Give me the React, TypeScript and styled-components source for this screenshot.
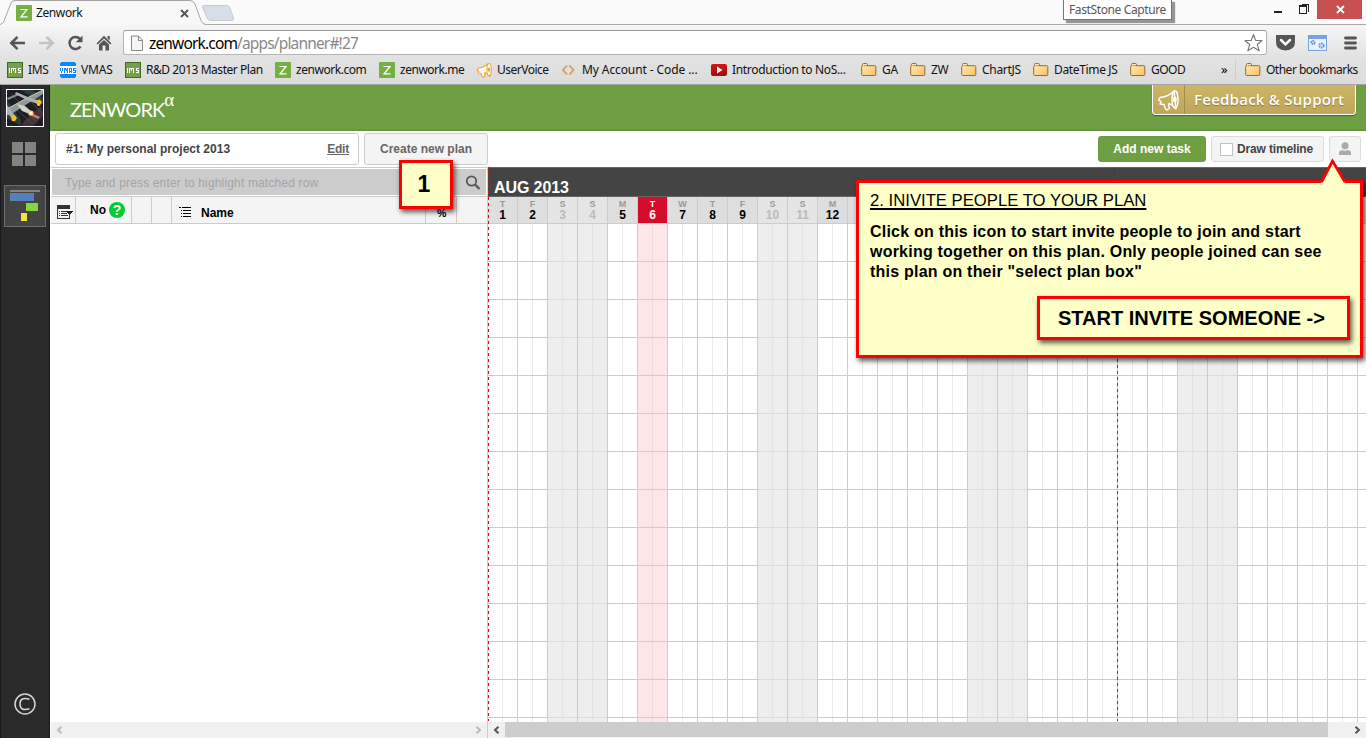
import React from "react";
import styled, { createGlobalStyle } from "styled-components";

const ui = '"Noto Sans", "Open Sans", sans-serif';
const arial = '"Liberation Sans", Arial, sans-serif';

const GlobalStyle = createGlobalStyle`
  * { box-sizing: border-box; }
  body { margin: 0; background: #fff; font-family: ${arial}; overflow: hidden; }
  svg { display: block; flex: none; }
`;

const Window = styled.div`
  position: relative;
  width: 1366px;
  height: 738px;
  display: flex;
  flex-direction: column;
  overflow: hidden;
`;

/* ---------- browser frame ---------- */
const TabStrip = styled.div`
  height: 25px;
  background: #fbfbfb;
  display: flex;
  position: relative;
  border-bottom: 1px solid #a9a9a9;
`;
const TabShape = styled.svg`
  position: absolute;
  left: 0;
  top: 0;
`;
const TabContent = styled.div`
  position: relative;
  display: flex;
  align-items: center;
  width: 204px;
  height: 25px;
  padding: 1px 15px 0 16px;
`;
const Label = styled.span<{ $w: number; $ls?: number }>`
  font: 12px/16px ${ui};
  letter-spacing: ${(p) => p.$ls ?? 0}px;
  width: ${(p) => p.$w}px;
  white-space: nowrap;
  flex: none;
  color: #111;
`;
const TabTitle = styled(Label)`
  margin-left: 4px;
  margin-right: auto;
`;
const WindowButtons = styled.div`
  margin-left: auto;
  margin-right: 4px;
  display: flex;
  gap: 7px;
`;
const CloseButton = styled.div`
  width: 45px;
  height: 19px;
  background: #c75050;
  display: flex;
  align-items: center;
  justify-content: center;
  padding-left: 1px;
`;
const HoverTip = styled.div`
  position: absolute;
  left: 1063px;
  top: -1px;
  width: 109px;
  height: 21px;
  border: 1px solid #767676;
  background: #fff;
  box-shadow: 3px 3px 1px rgba(0, 0, 0, 0.4);
  padding: 2px 0 0 5px;
`;
const TipLabel = styled(Label)`
  display: block;
  color: #575757;
`;
const Toolbar = styled.div`
  height: 60px;
  background: linear-gradient(#f6f6f6, #e2e2e2 55%, #dcdcdc);
  border-bottom: 1px solid #a5a5a5;
`;
const NavRow = styled.div`
  height: 31px;
  display: flex;
  align-items: center;
  padding: 4px 8px 0 9px;
`;
const NavIcons = styled.div`
  display: flex;
  width: 114px;
  gap: 12px;
  align-items: center;
`;
const Omnibox = styled.div`
  width: 1144px;
  height: 25px;
  background: #fff;
  border: 1px solid #b5b5b5;
  border-top-color: #999;
  border-radius: 3px;
  display: flex;
  align-items: center;
  padding: 0 3px 0 7px;
`;
const Url = styled.span`
  font: 15.5px/22px ${ui};
  letter-spacing: -0.84px;
  margin-left: 6px;
  margin-right: auto;
  color: #000;
  i { font-style: normal; color: #888; }
`;
const ToolIcons = styled.div`
  display: flex;
  align-items: center;
  gap: 13px;
  margin-left: 9px;
  svg:last-child { margin-left: 4px; }
`;
const Bookmarks = styled.div`
  height: 28px;
  display: flex;
  gap: 12px;
  padding: 0 0 0 7px;
  align-items: center;
`;
const Bookmark = styled.div`
  display: flex;
  align-items: center;
  gap: 5px;
  flex: none;
`;
const More = styled.span`
  font: 13px/16px ${ui};
  width: 10px;
  margin: 0 0 2px 23px;
`;
const BarSeparator = styled.div`
  width: 1px;
  height: 22px;
  background: #c8cfd6;
  margin: 0 -3px 0 -8px;
`;

/* ---------- application ---------- */
const Workspace = styled.div`
  flex: 1;
  display: flex;
  min-height: 0;
`;
const Sidebar = styled.aside`
  width: 50px;
  flex: none;
  background: #2a2a2a;
  border-left: 1px solid #15181e;
  border-right: 1px solid #15181e;
  display: flex;
  flex-direction: column;
  align-items: center;
  padding-top: 4px;
`;
const Avatar = styled.svg`
  border: 1px solid #fff;
`;
const GridIcon = styled.div`
  display: grid;
  grid-template-columns: 11px 11px;
  gap: 2px;
  margin-top: 15px;
  margin-right: 2px;
  span { height: 11px; background: #858282; }
`;
const PlannerTile = styled.div`
  width: 42px;
  height: 42px;
  margin-top: 19px;
  border: 1px solid #6d6d6d;
  background: #444;
`;
const Copyright = styled.div`
  margin: auto 0 23px 0;
`;
const Main = styled.main`
  flex: 1;
  min-width: 0;
  display: flex;
  flex-direction: column;
`;
const Banner = styled.header`
  height: 46px;
  background: #6ea043;
  border-bottom: 2px solid #679640;
  display: flex;
  padding: 0 10px 0 20px;
  justify-content: space-between;
`;
const Logo = styled.div`
  font: 20px/24px Lato, sans-serif;
  color: #fff;
  letter-spacing: -1px;
  padding-top: 12px;
  display: flex;
  sup { font: 19px/12px "Liberation Serif", serif; margin: -3px 0 0 0; }
`;
const Feedback = styled.div`
  width: 204px;
  height: 30px;
  background: linear-gradient(#cdb565, #bfa75b);
  border: 1px solid #fff;
  border-top: 0;
  border-radius: 0 0 4px 4px;
  box-shadow: 0 1px 1px #555;
  display: flex;
  align-items: center;
  svg { margin-left: 4px; }
  span {
    border-left: 1px solid #a28e4c;
    margin-left: 5px;
    padding-left: 9px;
    height: 29px;
    white-space: nowrap;
    font: 600 15px/29px "Open Sans", sans-serif;
    letter-spacing: 0.25px;
    color: #fff;
    text-shadow: 0 1px 1px #8a7634;
  }
`;
const PlanBar = styled.div`
  height: 36px;
  display: flex;
  gap: 5px;
  padding: 2px 5px 0 5px;
  font: bold 12px/32px ${arial};
`;
const Box = styled.div<{ $w: number; $h?: number; $plain?: boolean; $green?: boolean }>`
  width: ${(p) => p.$w}px;
  height: ${(p) => p.$h ?? 32}px;
  line-height: ${(p) => (p.$h ?? 32) - 2}px;
  border: 1px solid ${(p) => (p.$green ? "#6a9a42" : p.$h ? "#dcdcdc" : "#ccc")};
  border-radius: 3px;
  background: ${(p) => (p.$green ? "#6ea043" : p.$plain ? "#fff" : "#f4f4f4")};
  color: ${(p) => (p.$green ? "#fff" : p.$plain ? "#444" : "#666")};
  display: flex;
  justify-content: ${(p) => (p.$plain ? "space-between" : "center")};
  align-items: center;
  padding: 0 ${(p) => (p.$plain ? 10 : 0)}px;
  u { color: #666; margin-right: -1px; letter-spacing: -0.2px; }
`;
const Actions = styled.div`
  display: flex;
  gap: 5px;
  margin-left: auto;
  padding-top: 3px;
`;
const DrawLabel = styled.span`
  color: #444;
  margin: 0 2px 0 4px;
  letter-spacing: -0.15px;
`;
const CheckBox = styled.span`
  width: 13px;
  height: 13px;
  border: 1px solid #c0c0c0;
  background: #fff;
`;
const Work = styled.div`
  flex: 1;
  min-height: 0;
  display: flex;
`;
const TaskPane = styled.section`
  width: 438px;
  flex: none;
  border-right: 1px solid #ccc;
  border-left: 1px solid #fff;
  display: flex;
  flex-direction: column;
`;
const SearchRow = styled.div`
  height: 30px;
  border: solid #ccc;
  border-width: 1px 0;
  padding: 1px;
`;
const SearchField = styled.div`
  height: 26px;
  background: #ccc;
  color: #a5a5a5;
  font: 12px/28px ${arial};
  letter-spacing: 0.16px;
  padding: 1px 5px 0 13px;
  display: flex;
  justify-content: space-between;
  align-items: center;
`;
const HeadRow = styled.div`
  height: 27px;
  background: #f4f4f4;
  border-bottom: 1px solid #ccc;
  display: flex;
`;
const HeadCell = styled.div<{ $w: number; $last?: boolean }>`
  width: ${(p) => p.$w}px;
  border-right: ${(p) => (p.$last ? 0 : 1)}px solid #ccc;
  display: flex;
  align-items: center;
  font: bold 12px/26px ${arial};
  color: #000;
`;
const ListIcon = styled.svg`
  margin: 5px 0 0 6px;
`;
const OutlineIcon = styled.svg`
  margin: 2px 1px 0 -1px;
`;
const NoText = styled.span`
  margin: 0 4px 0 14px;
`;
const NameText = styled.span`
  padding: 5px 0 0 8px;
`;
const Percent = styled.span`
  font: bold 10.5px/12px ${arial};
  padding: 6px 0 0 11px;
`;
const Help = styled.span`
  width: 16px;
  height: 16px;
  border-radius: 50%;
  background: #0c3;
  color: #fff;
  font: bold 14px/16px ${arial};
  text-align: center;
  margin-left: -1px;
`;
const TaskList = styled.div`
  flex: 1;
`;
const ScrollBar = styled.div`
  height: 16px;
  background: #f0f0f0;
  display: flex;
  align-items: center;
  justify-content: space-between;
  padding: 0 5px 1px;
`;
const Thumb = styled.div`
  width: 823px;
  height: 15px;
  margin-right: auto;
  margin-left: 5px;
  align-self: flex-start;
  background: #cdcdcd;
`;
const Gantt = styled.section`
  position: relative;
  flex: 1;
  min-width: 0;
  display: flex;
  flex-direction: column;
`;
const Month = styled.div`
  height: 30px;
  background: #444;
  border-top: 1px solid #666;
  border-bottom: 1px solid #666;
  color: #fff;
  font: bold 16px/18px ${arial};
  letter-spacing: -0.1px;
  padding: 11px 0 0 6px;
`;
const Days = styled.div`
  flex: 1;
  min-height: 0;
  display: flex;
  overflow: hidden;
`;
type Kind = "work" | "off" | "today";
const DayColumn = styled.div`
  width: 30px;
  flex: none;
  display: flex;
  flex-direction: column;
`;
const DayHead = styled.div<{ $kind: Kind }>`
  height: 27px;
  border-right: 1px solid #ccc;
  border-bottom: 1px solid #ccc;
  background: ${(p) => ({ work: "#dedede", off: "#e5e5e5", today: "#d60c2c" })[p.$kind]};
  color: ${(p) => ({ work: "#000", off: "#bbb", today: "#fff" })[p.$kind]};
  text-align: center;
  font: bold 12px/13px ${arial};
  padding-top: 2px;
  small {
    display: block;
    font: bold 9px/10px ${arial};
    color: ${(p) => (p.$kind === "today" ? "#fff" : "#999")};
  }
`;
const rowLine = { work: "#ccc", off: "#dcdcdc", today: "#dfc6c8" };
const halfLine = { work: "#ebebeb", off: "#e4e4e4", today: "#f1d8da" };
const dayFill = { work: "#fff", off: "#eee", today: "#fde6e8" };
const DayBody = styled.div<{ $kind: Kind }>`
  flex: 1;
  border-right: 1px solid #ccc;
  background:
    repeating-linear-gradient(transparent 0 37px, ${(p) => rowLine[p.$kind]} 37px 38px),
    linear-gradient(${(p) => halfLine[p.$kind]}, ${(p) => halfLine[p.$kind]}) 14px 0 / 1px 100% no-repeat
    ${(p) => dayFill[p.$kind]};
`;
const DashLine = styled.div<{ $x: number }>`
  position: absolute;
  left: ${(p) => p.$x}px;
  top: 0;
  width: 1px;
  height: 554px;
  background: repeating-linear-gradient(#e00f0f 0 3px, transparent 3px 6px);
`;

/* ---------- tour notes ---------- */
const Note = styled.div`
  position: absolute;
  border: 3px solid #f00;
  background: #ffffc8;
  color: #000;
  box-shadow: 2px 3px 5px rgba(0, 0, 0, 0.65);
`;
const StepOne = styled(Note)`
  left: 399px;
  top: 160px;
  width: 54px;
  height: 49px;
  font: bold 23px/43px ${arial};
  text-align: center;
  padding-right: 4px;
`;
const StepTwo = styled(Note)`
  left: 856px;
  top: 180px;
  width: 507px;
  height: 178px;
  padding: 8px 10px 0 11px;
`;
const NoteTitle = styled.div`
  font: 16.7px/20px ${arial};
  text-decoration: underline;
  text-decoration-thickness: 2px;
  text-underline-offset: 2px;
  white-space: nowrap;
`;
const NoteText = styled.p`
  margin: 11px 0 0;
  font: bold 16px/20px ${arial};
  letter-spacing: 0.22px;
  white-space: nowrap;
`;
const InviteButton = styled(Note)`
  position: relative;
  width: 313px;
  height: 44px;
  margin: 14px 0 0 auto;
  font: bold 20px/38px ${arial};
  padding-left: 18px;
  white-space: nowrap;
`;
const Pointer = styled.svg`
  position: absolute;
  left: 1320px;
  top: 158px;
`;

/* ---------- icons ---------- */
const Zen = () => (
  <svg width="16" height="16"><rect width="16" height="16" rx="1" fill="#76b043" /><path d="M4.500 4.500h6.500L5 11.800h6.500" fill="none" stroke="#fff" strokeWidth="1.200" /></svg>
);
const Ims = () => (
  <svg width="16" height="16" shapeRendering="crispEdges"><rect x=".5" y=".5" width="15" height="15" fill="#76a04c" stroke="#3f6a22" /><path d="M2.500 6v5M5 6.500h4M4.500 6v5M6.500 7v2M8.500 6v5M14 6.500h-3v2h2.500v2h-3" fill="none" stroke="#fff" /></svg>
);
const Vmas = () => (
  <svg width="16" height="16" shapeRendering="crispEdges"><path d="M1 0h14v1h1v4H0V1h1zM0 12h16v3h-1v1H1v-1H0z" fill="#0d85ff" /><rect y="4" width="16" height="8" fill="#fff" /><path d="M.5 6v3M1.500 9v2M2.500 6v3M4.500 11V6M5.500 6v2M6.500 7v2M7.500 6v5M9.500 11V6.500h2V11M9 9.500h3M16 6.500h-2.500v2h2v2H13" fill="none" stroke="#0d85ff" /></svg>
);
const Horn = ({ c = "#f0a030", s = 16, f = "#fff" }) => (
  <svg width={s} height={s} viewBox="0 0 22 22" fill={f} stroke={c} strokeWidth="1.400" strokeLinejoin="round"><path d="M1.500 11 3 8.500Q12 7.500 17 2l2 18Q15.500 15.500 12 14.500l-.5 2 1 3-2.500 1.500-1.500-1-1.500-4.500L3 15l1-2.500z" /><ellipse cx="18" cy="10.500" rx="3" ry="8.500" /><ellipse cx="17.800" cy="10.500" rx="1.200" ry="2.200" fill={c} /></svg>
);
const Code = () => (
  <svg width="16" height="16" fill="none" stroke="#e59350" strokeWidth="1.700"><path d="M6 3.500 2 8l4 4.500M8.500 3.500l4 4.500-4 4.500" /></svg>
);
const Tube = () => (
  <svg width="16" height="16"><defs><linearGradient id="yt" x2="0" y2="1"><stop stopColor="#d01818" /><stop offset="1" stopColor="#a00c0c" /></linearGradient></defs><rect y="2" width="16" height="12" rx="2" fill="url(#yt)" /><path d="M6 4.500 11.500 8 6 11.500z" fill="#fff" /></svg>
);
const Folder = () => (
  <svg width="16" height="16"><defs><linearGradient id="fo" x2="1" y2="1"><stop stopColor="#fff0bd" /><stop offset="1" stopColor="#fcc060" /></linearGradient></defs><path d="M.7 12.500v-8q0-.8.800-.8V2.600q0-1.100 1-1.100h3q1 0 1 1.200v1h7.300q1 0 1 1v7.800q0 1-1 1H1.700q-1 0-1-1z" fill="url(#fo)" stroke="#96683d" /><path d="M2.500 3.700h4.200" stroke="#96683d" strokeWidth=".7" /></svg>
);
const ChevronGlyph = ({ right, c }: { right?: boolean; c: string }) => (
  <svg width="7" height="8" fill="none" stroke={c} strokeWidth="2"><path d={right ? "M1.500.700 5 4 1.500 7.300" : "M5.500.700 2 4l3.500 3.300"} /></svg>
);

const bookmarks: [React.FC, string, number, number][] = [
  [Ims, "IMS", 20, -0.4],
  [Vmas, "VMAS", 32, -0.2],
  [Ims, "R&D 2013 Master Plan", 117, -0.45],
  [Zen, "zenwork.com", 71, -0.46],
  [Zen, "zenwork.me", 64, -0.48],
  [Horn, "UserVoice", 52, -0.5],
  [Code, "My Account - Code ...", 117, -0.1],
  [Tube, "Introduction to NoS...", 117, -0.33],
  [Folder, "GA", 16, -0.3],
  [Folder, "ZW", 18, -0.3],
  [Folder, "ChartJS", 39, -0.3],
  [Folder, "DateTime JS", 64, -0.35],
  [Folder, "GOOD", 35, -0.5],
];

const letters = "TFSSMTW";
const lastLabelledDay = 12;
const days = Array.from({ length: 30 }, (_, i) => {
  const letter = letters[i % 7];
  const kind: Kind = i === 5 ? "today" : letter === "S" ? "off" : "work";
  return { n: i + 1, letter, kind };
});

export default function App() {
  return (
    <Window>
      <GlobalStyle />
      <TabStrip>
        <TabShape width="240" height="26">
          <path d="M0 25.500V24.500Q3 24 4 21L10.500 4Q11.500.500 15 .5H190Q193.500.500 195 4L201 20.500Q202.500 24.500 206 24.500V25.500Z" fill="#f8f8f8" />
          <path d="M0 24.500Q3 24 4 21L10.500 4Q11.500.500 15 .5H190Q193.500.500 195 4L201 20.500Q202.500 24.500 206 24.500" fill="none" stroke="#a6a6a6" />
          <path d="M204 5.500H226.500Q229 5.500 230 8L233.500 18Q234 20.500 231.500 20.500H211Q208 20.500 207 18L202.800 8Q202 5.500 204 5.500Z" fill="#d8dee7" stroke="#c8ccd2" />
        </TabShape>
        <TabContent>
          <Zen />
          <TabTitle $w={60} $ls={-0.4}>Zenwork</TabTitle>
          <svg width="9" height="9" stroke="#555" strokeWidth="1.900"><path d="m1 1 7 7M8 1 1 8" /></svg>
        </TabContent>
        <WindowButtons>
          <svg width="36" height="20" fill="none" stroke="#222" shapeRendering="crispEdges"><path d="M0 12h8" strokeWidth="2" /><path d="M25.500 5.500h7v8h-7zM25 6.500h8M28 4.500h6.500V12" /></svg>
          <CloseButton><svg width="9" height="9" stroke="#fff" strokeWidth="1.800"><path d="m1 1 7 7M8 1 1 8" /></svg></CloseButton>
        </WindowButtons>
        <HoverTip><TipLabel $w={97} $ls={-0.38}>FastStone Capture</TipLabel></HoverTip>
      </TabStrip>
      <Toolbar>
        <NavRow>
          <NavIcons>
            <svg width="17" height="16" fill="none" stroke="#555" strokeWidth="2.600"><path d="M16 8H3M8.500 1.800 2.300 8l6.200 6.200" /></svg>
            <svg width="17" height="16" fill="none" stroke="#c3c3c3" strokeWidth="2.600"><path d="M1 8h13M8.500 1.800 14.700 8l-6.200 6.200" /></svg>
            <svg width="17" height="16" fill="none" stroke="#555" strokeWidth="2.500"><path d="M13.500 11.500A6 6 0 1 1 13 4" /><path d="M15.500.500v6.800H8.800z" fill="#555" stroke="none" /></svg>
            <svg width="17" height="16" fill="#555"><path d="M8 .8 15.500 8.500 14.300 9.500 8 3.500 1.700 9.500.5 8.500zM11.500 1h2.200v4.500L11.500 3.500zM3 9.500 8 5l5 4.500V15.500H9.500V10.500h-3v5H3z" /></svg>
          </NavIcons>
          <Omnibox>
            <svg width="12" height="16"><path d="M.5 1h7l4 4v10.500H.5z" fill="#f5f5f5" stroke="#8a8a8a" /><path d="M7.500 1v4.500h4" fill="none" stroke="#8a8a8a" /></svg>
            <Url>zenwork.com<i>/apps/planner#!27</i></Url>
            <svg width="20" height="20" viewBox="0 0 20 20"><path d="m10.500 1.500 2.200 6H19l-4.700 4 1.900 6.300-5.700-3.600-5.700 3.600 1.900-6.300-4.700-4h6.200z" fill="#fff" stroke="#777" strokeWidth="1.100" strokeLinejoin="round" /></svg>
          </Omnibox>
          <ToolIcons>
            <svg width="19" height="17"><path d="M0 1h19v7q0 8-9.500 8.500Q0 16 0 8z" fill="#555" /><path d="m5 6 4.500 4.300L14 6" fill="none" stroke="#fff" strokeWidth="2.500" strokeLinecap="round" /></svg>
            <svg width="19" height="16"><rect x=".5" y=".5" width="18" height="15" fill="#eaf1fb" stroke="#79a3dc" /><path d="M0 0h19v4H0z" fill="#79a3e0" /><g fill="none" stroke="#6d95d0" strokeWidth="2" strokeDasharray="1.500 .6"><circle cx="5" cy="7.500" r="1.600" /><circle cx="13.500" cy="10.500" r="2.100" /></g></svg>
            <svg width="13" height="14" stroke="#555" strokeWidth="2.800" strokeLinecap="round"><path d="M1.500 2h10M1.500 7h10M1.500 12h10" /></svg>
          </ToolIcons>
        </NavRow>
        <Bookmarks>
          {bookmarks.map(([Icon, text, w, ls]) => (
            <Bookmark key={text}><Icon /><Label $w={w} $ls={ls}>{text}</Label></Bookmark>
          ))}
          <More>»</More>
          <BarSeparator />
          <Bookmark><Folder /><Label $w={93} $ls={-0.5}>Other bookmarks</Label></Bookmark>
        </Bookmarks>
      </Toolbar>
      <Workspace>
        <Sidebar>
          <Avatar width="38" height="38" viewBox="0 0 36 36">
            <rect width="36" height="36" fill="#201c24" />
            <path d="M14 0h12l10 8v6zM0 10l14 20v6L0 28z" fill="#2c3c42" />
            <path d="m18 30 16-14 2 10-10 10H14z" fill="#46303a" />
            <path d="M10 20 26 34M16 20l14 12M24 12l12 12M4 4l8 8" stroke="#4d4f5a" strokeWidth=".8" />
            <path d="M0 8 12 3l1 1.500L1 10z" fill="#7f8f8f" />
            <path d="M0 19 20 8 36 0v4L20 14 3 25 0 25z" fill="#8f9a98" />
            <path d="M0 19 20 8 36 0" fill="none" stroke="#c9cfc8" />
            <path d="m9 2 14 6 9 2.500-1 3.500-9-3L8 4zM0 15l9 12-2 3-7-7z" fill="#a9b2ac" />
            <path d="m10 14 8 2 7 6-2 2-8-3z" fill="#d0d4cb" />
            <path d="m24 23 9 4-2 2-8-4z" fill="#c98260" />
            <path d="M29 12q1-3 4-2.500l2 3-2.500 3.500h-2z" fill="#efc31a" />
            <path d="M4 27q1-2 4-1.500l2 2.500-2 3H5z" fill="#efc31a" />
            <circle cx="24" cy="23" r="2.600" fill="#ffc98a" /><circle cx="24" cy="23" r="1.300" fill="#fffbe0" />
          </Avatar>
          <GridIcon><span /><span /><span /><span /></GridIcon>
          <PlannerTile>
            <svg width="40" height="40"><path d="M5 5h30" stroke="#999" strokeWidth="1.500" /><path d="M5 7h24v8H5z" fill="#5481ba" /><path d="M21 17h12v8H21z" fill="#86d73e" /><path d="M16 27h6v8h-6z" fill="#f7e23c" /></svg>
          </PlannerTile>
          <Copyright>
            <svg width="22" height="22" fill="none" stroke="#d5d5d5" strokeWidth="1.500"><circle cx="11" cy="11" r="10" /><path d="M15.500 6.200Q6 3.400 6 11t9.500 4.800" /></svg>
          </Copyright>
        </Sidebar>
        <Main>
          <Banner>
            <Logo>ZENWORK<sup>α</sup></Logo>
            <Feedback><Horn c="#fff" f="none" s={22} /><span>Feedback &amp; Support</span></Feedback>
          </Banner>
          <PlanBar>
            <Box $w={304} $plain><span>#1: My personal project 2013</span><u>Edit</u></Box>
            <Box $w={124}>Create new plan</Box>
            <Actions>
              <Box $w={108} $h={26} $green>Add new task</Box>
              <Box $w={113} $h={26}><CheckBox /><DrawLabel>Draw timeline</DrawLabel></Box>
              <Box $w={32} $h={26}><svg width="12" height="14" fill="#aaa"><circle cx="6" cy="3.700" r="3.500" /><path d="M0 13v-2q0-2.500 3-3 3 1.500 6 0 3 .5 3 3v2z" /></svg></Box>
            </Actions>
          </PlanBar>
          <Work>
            <TaskPane>
              <SearchRow>
                <SearchField>Type and press enter to highlight matched row
                  <svg width="16" height="16" fill="none" stroke="#555"><circle cx="6.500" cy="6" r="4.700" strokeWidth="1.700" /><path d="m10 9.500 4.500 4.500" strokeWidth="2.300" /></svg>
                </SearchField>
              </SearchRow>
              <HeadRow>
                <HeadCell $w={25}>
                  <ListIcon width="17" height="15" shapeRendering="crispEdges"><path d="M.5 2v12M0 13.500h13M12.500 10v4" stroke="#333" fill="none" /><path d="M0 0h13v4H0z" fill="#333" /><path d="M2 6.500h1M4 6.500h7M2 8.500h1M4 8.500h6M2 10.500h1M4 10.500h7" stroke="#333" /><path d="M8.500 6h8l-4 4z" fill="#222" /></ListIcon>
                </HeadCell>
                <HeadCell $w={56}><NoText>No</NoText><Help>?</Help></HeadCell>
                <HeadCell $w={20} />
                <HeadCell $w={20} />
                <HeadCell $w={254}>
                  <OutlineIcon width="21" height="16" stroke="#000" shapeRendering="crispEdges"><path d="M8 4.500h2M10 7.500h1M10 10.500h1M10 13.500h1" /><path d="M11 4.500h9M12 7.500h8M12 10.500h8M12 13.500h8" strokeWidth="1.500" /></OutlineIcon>
                  <NameText>Name</NameText>
                </HeadCell>
                <HeadCell $w={31}><Percent>%</Percent></HeadCell>
                <HeadCell $w={30} $last />
              </HeadRow>
              <TaskList />
              <ScrollBar><ChevronGlyph c="#bbb" /><ChevronGlyph right c="#bbb" /></ScrollBar>
            </TaskPane>
            <Gantt>
              <Month>AUG 2013</Month>
              <Days>
                {days.map((d) => (
                  <DayColumn key={d.n}>
                    <DayHead $kind={d.kind}>
                      {d.n <= lastLabelledDay && <><small>{d.letter}</small>{d.n}</>}
                    </DayHead>
                    <DayBody $kind={d.kind} />
                  </DayColumn>
                ))}
              </Days>
              <ScrollBar><ChevronGlyph c="#555" /><Thumb /><ChevronGlyph right c="#555" /></ScrollBar>
              <DashLine $x={0} />
              <DashLine $x={629} />
            </Gantt>
          </Work>
        </Main>
      </Workspace>
      <StepOne>1</StepOne>
      <StepTwo>
        <NoteTitle>2. INIVITE PEOPLE TO YOUR PLAN</NoteTitle>
        <NoteText>Click on this icon to start invite people to join and start<br />working together on this plan. Only people joined can see<br />this plan on their "select plan box"</NoteText>
        <InviteButton>START INVITE SOMEONE -&gt;</InviteButton>
      </StepTwo>
      <Pointer width="27" height="26"><path d="M1 25 12.500 3 25 25z" fill="#ffffc8" /><path d="M1.500 24 12.500 3 25 24" fill="none" stroke="#f00" strokeWidth="2.800" /></Pointer>
    </Window>
  );
}
